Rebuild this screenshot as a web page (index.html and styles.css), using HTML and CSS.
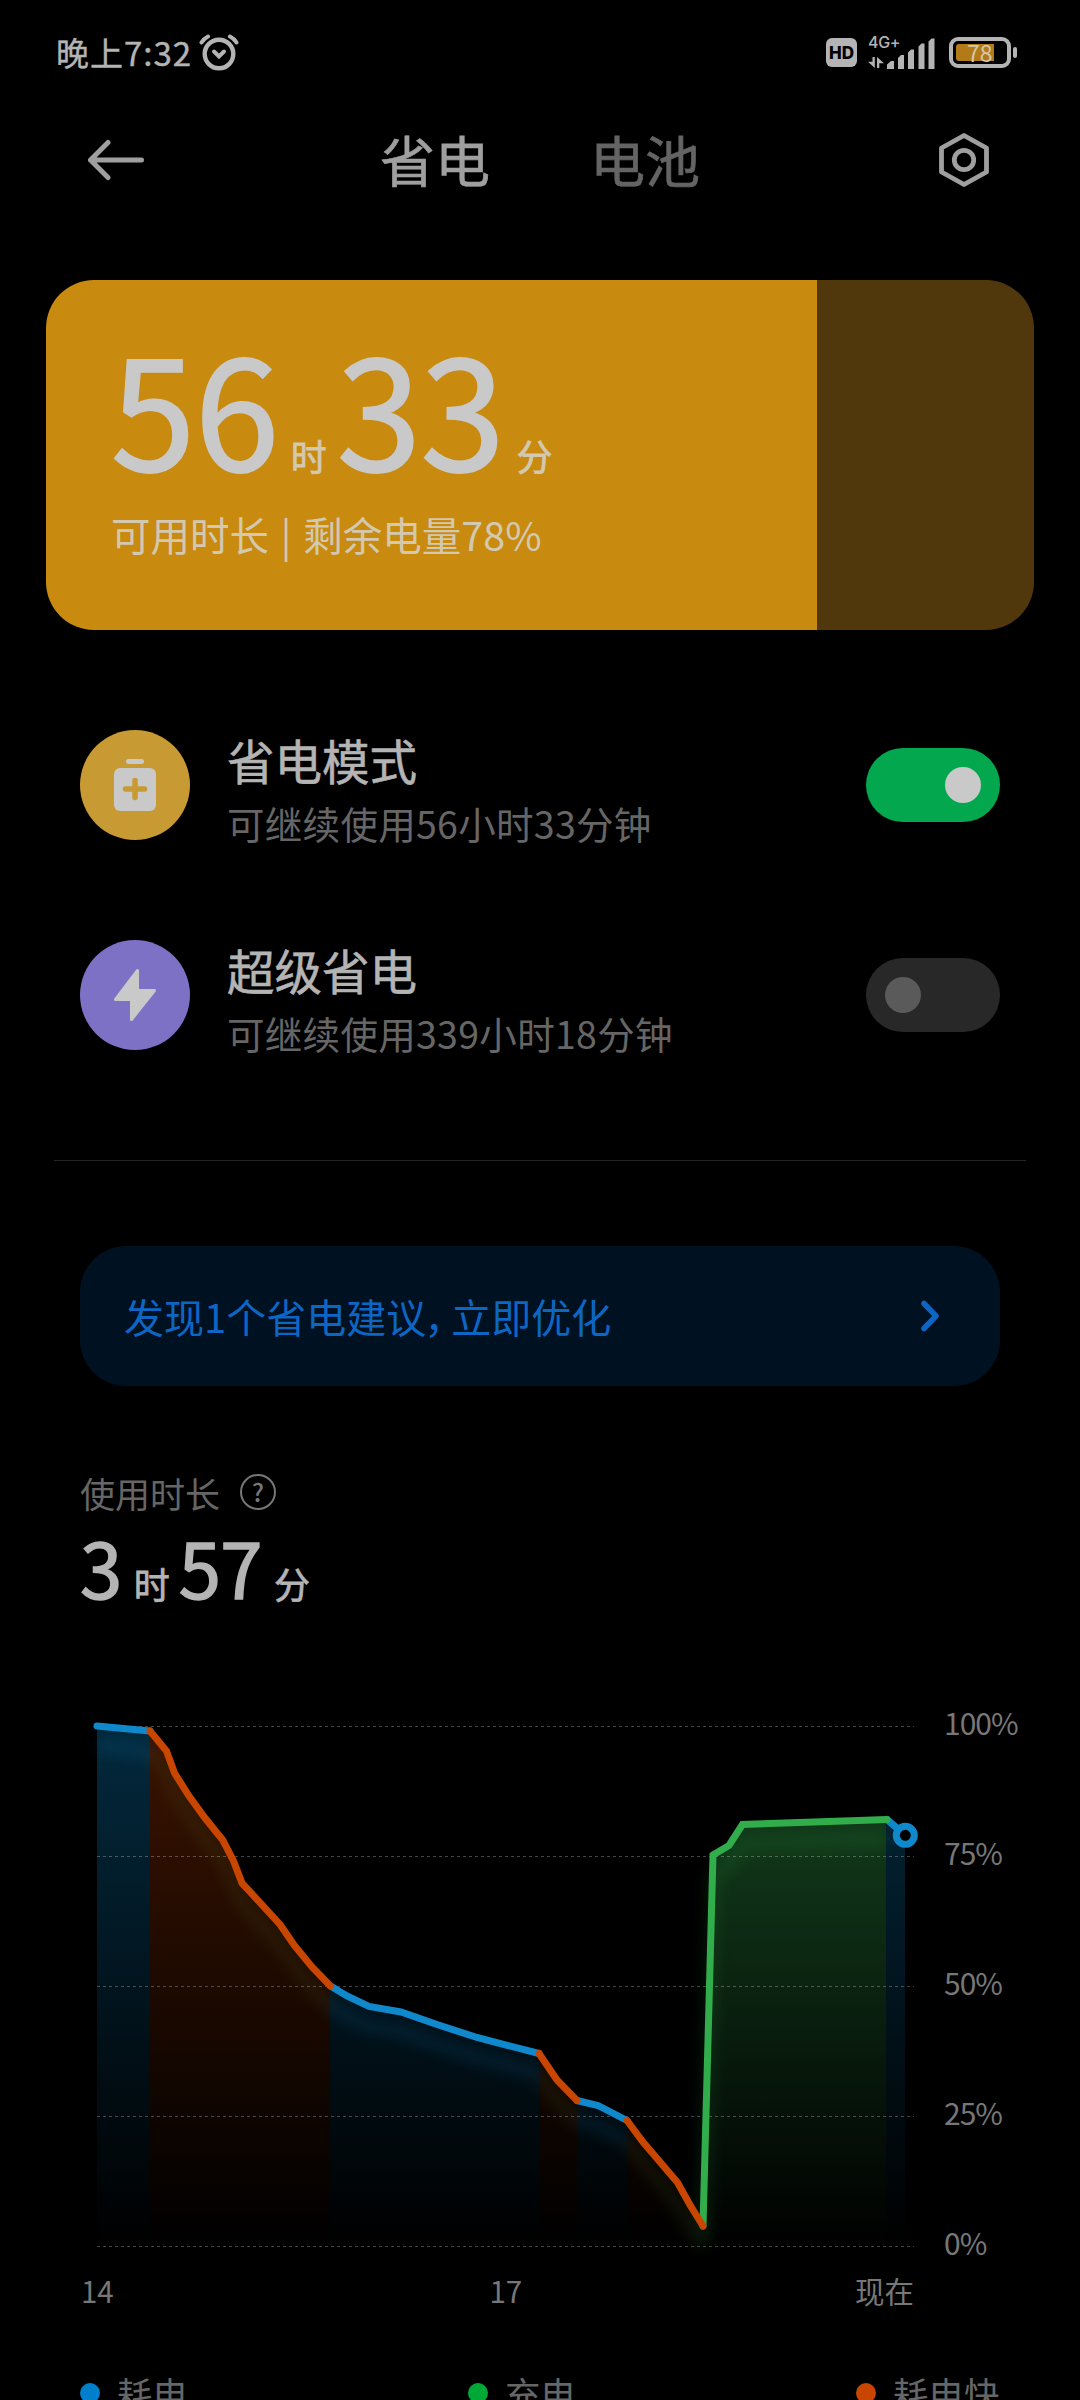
FILE: index.html
```html
<!DOCTYPE html>
<html lang="zh-CN">
<head>
  <meta charset="UTF-8">
  <title>省电与电池</title>
  <link rel="stylesheet" href="styles.css">
</head>
<body>

  <div class="status-bar">
    <span class="time">晚上7:32</span>
    <svg class="alarm" width="40" height="38" viewBox="0 0 40 38" fill="none" stroke="#b4b4b4" stroke-linecap="round">
      <circle cx="20" cy="21" r="14.3" stroke-width="4.4"/>
      <path d="M15 18.5l5 5 5-5" stroke-width="4"/>
      <path d="M2.500 9.500Q5 5.500 9 3.500M37.500 9.500Q35 5.500 31 3.500" stroke-width="4"/>
    </svg>
    <div class="status-icons">
      <span class="hd">HD</span>
      <div class="network">
        <span class="net-type">4G+</span>
        <svg width="68" height="34" viewBox="0 0 68 34" fill="#b4b4b4">
          <path d="M4.500 22H6.800V33L0 26.800H4.500ZM9 22L16 28.200H11.300V33H9Z"/>
          <path d="M19 34v-4.500l4-3.500h3v8zM30 34V23l3-3h3v14zM40 34V17.500l3-3h3V34zM50.500 34V11.500l3-3h3V34zM60.500 34V6.500l3-3h3V34z"/>
        </svg>
      </div>
      <div class="battery">
        <div class="battery-level"></div>
        <span class="battery-num">78</span>
      </div>
    </div>
  </div>

  <header>
    <svg width="58" height="42" viewBox="0 0 58 42" fill="none" stroke="#9f9f9f" stroke-width="5" stroke-linecap="round" stroke-linejoin="round">
      <path d="M54.500 21H3.500M21 3.500L3.500 21 21 38.500"/>
    </svg>
    <nav>
      <span class="tab active">省电</span>
      <span class="tab">电池</span>
    </nav>
    <svg width="52" height="56" viewBox="0 0 52 56" fill="none" stroke="#9f9f9f" stroke-width="4.800" stroke-linejoin="round">
      <path d="M26 3.500L48.500 16V40L26 52.500 3.500 40V16Z"/>
      <circle cx="26" cy="28" r="9.700"/>
    </svg>
  </header>

  <section class="battery-card">
    <div class="big-time"><b>56</b><i>时</i><b>33</b><i>分</i></div>
    <p>可用时长 | 剩余电量78%</p>
  </section>

  <section class="modes">
    <div class="mode">
      <div class="mode-icon yellow">
        <svg width="42" height="52" viewBox="0 0 42 52">
          <rect x="12" y="0" width="18" height="5" rx="2.500" fill="#c9c9c9"/>
          <rect x="0" y="9" width="42" height="43" rx="6" fill="#c9c9c9"/>
          <path d="M21 21.500V38.500M11.500 30H30.500" stroke="#c89a33" stroke-width="5.500" stroke-linecap="round"/>
        </svg>
      </div>
      <div class="mode-text">
        <h2>省电模式</h2>
        <p>可继续使用56小时33分钟</p>
      </div>
      <div class="switch on"></div>
    </div>
    <div class="mode">
      <div class="mode-icon purple">
        <svg width="44" height="54" viewBox="0 0 44 54" fill="#c9c9c9" stroke="#c9c9c9" stroke-width="3" stroke-linejoin="round">
          <path d="M24.500 2.500V22.500H41.500L18.500 51.500V31.500H2.500Z"/>
        </svg>
      </div>
      <div class="mode-text">
        <h2>超级省电</h2>
        <p>可继续使用339小时18分钟</p>
      </div>
      <div class="switch"></div>
    </div>
  </section>

  <a class="tip" href="#">
    <span>发现1个省电建议<span class="comma">，</span>立即优化</span>
    <svg width="20" height="32" viewBox="0 0 20 32" fill="none" stroke="#0d66c4" stroke-width="5.500" stroke-linecap="round" stroke-linejoin="round">
      <path d="M4 3.500L16 16 4 28.500"/>
    </svg>
  </a>

  <section class="usage">
    <div class="usage-label">使用时长<span class="help">?</span></div>
    <div class="usage-time"><b>3</b><i>时</i><b>57</b><i>分</i></div>
  </section>

  <section class="chart">
    <svg width="840" height="560" viewBox="80 1706 840 560" fill="none">
      <defs>
        <linearGradient id="blue" gradientUnits="userSpaceOnUse" x1="0" y1="1726" x2="0" y2="2246">
          <stop offset="0" stop-color="#03293d"/>
          <stop offset="1" stop-color="#000"/>
        </linearGradient>
        <linearGradient id="orange" gradientUnits="userSpaceOnUse" x1="0" y1="1726" x2="0" y2="2246">
          <stop offset="0" stop-color="#3a1300"/>
          <stop offset="1" stop-color="#000"/>
        </linearGradient>
        <linearGradient id="green" gradientUnits="userSpaceOnUse" x1="0" y1="1820" x2="0" y2="2246">
          <stop offset="0" stop-color="#11391a"/>
          <stop offset="1" stop-color="#000"/>
        </linearGradient>
        <filter id="glow" filterUnits="userSpaceOnUse" x="60" y="1690" width="880" height="600">
          <feGaussianBlur stdDeviation="7"/>
        </filter>
      </defs>

      <!-- relleno -->
      <path fill="url(#blue)" d="M97 2246V1726L150 1731V2246ZM330 2246V1986L347 1996 369 2006.500 401 2012 437 2024.500 477 2037.500 539 2053.500V2246ZM577 2246V2100.500L598 2105.500 627 2120.500V2246ZM886 2246V1819.500L905 1835V2246Z"/>
      <path fill="url(#orange)" d="M150 2246V1731L166.500 1751 174.500 1773 189 1796 205 1818 222.700 1840 233.500 1861 242 1883 280 1924.500 294 1945 312 1967 330 1986V2246ZM539 2246V2053.500L557 2080 577 2100.500V2246ZM627 2246V2120.500L643 2142 677.500 2182.500 690 2205 703 2226V2246Z"/>
      <path fill="url(#green)" d="M703 2246V2226L713 1855 729 1845.500 742.500 1824.500 886 1819.500V2246Z"/>

      <g stroke-width="14" transform="translate(0 20)" filter="url(#glow)" opacity=".13">
        <path stroke="#1088cc" d="M97 1726L150 1731M330.500 1986L347 1996 369 2006.500 401 2012 437 2024.500 477 2037.500 539 2053.500M577 2100.500L598 2105.500 627 2120.500"/>
        <path stroke="#5a7a30" d="M150 1731L166.500 1751 174.500 1773 189 1796 205 1818 222.700 1840 233.500 1861 242 1883 280 1924.500 294 1945 312 1967 330.500 1986M539 2053.500L557 2080 577 2100.500M627 2120.500L643 2142 677.500 2182.500 690 2205 703 2226"/>
        <path stroke="#32ad4c" d="M703 2226L713 1855 729 1845.500 742.500 1824.500 887 1819.500"/>
      </g>

      <path stroke="#fff" stroke-opacity=".27" stroke-dasharray="3 3" d="M97 1726.500H914M97 1856.500H914M97 1986.500H914M97 2116.500H914M97 2246.500H914"/>

      <!-- linea de bateria -->
      <g stroke-width="7" stroke-linecap="round">
        <path stroke="#1088cc" d="M97 1726L150 1731M330.500 1986L347 1996 369 2006.500 401 2012 437 2024.500 477 2037.500 539 2053.500M577 2100.500L598 2105.500 627 2120.500M887 1819.500L905 1835"/>
        <path stroke="#32ad4c" d="M703 2226L713 1855 729 1845.500 742.500 1824.500 887 1819.500"/>
        <path stroke="#c84600" d="M150 1731L166.500 1751 174.500 1773 189 1796 205 1818 222.700 1840 233.500 1861 242 1883 280 1924.500 294 1945 312 1967 330.500 1986M539 2053.500L557 2080 577 2100.500M627 2120.500L643 2142 677.500 2182.500 690 2205 703 2226"/>
      </g>
      <circle cx="905.300" cy="1835.300" r="9" fill="#000" stroke="#1088cc" stroke-width="7"/>
    </svg>
    <div class="y-axis">
      <span>100%</span>
      <span>75%</span>
      <span>50%</span>
      <span>25%</span>
      <span>0%</span>
    </div>
  </section>

  <div class="x-axis">
    <span>14</span>
    <span class="middle">17</span>
    <span>现在</span>
  </div>

  <footer>
    <span class="legend blue">耗电</span>
    <span class="legend green">充电</span>
    <span class="legend orange">耗电快</span>
  </footer>

</body>
</html>
```
FILE: styles.css
```css
* {
  box-sizing: border-box;
}

body {
  margin: 0;
  height: 2400px;
  overflow: hidden;
  background-color: #000;
  color: #b4b4b4;
  font-family: 'Noto Sans CJK SC', 'Noto Sans', sans-serif;
}

h2, p {
  margin: 0;
  font-weight: normal;
}

i {
  font-style: normal;
}

svg {
  display: block;
  flex: none;
}

/* barra de estado */
.status-bar {
  display: flex;
  height: 104px;
  padding: 0 63px 0 56px;
  align-items: center;
}

.time {
  font-size: 33px;
  letter-spacing: 1px;
  line-height: 40px;
  white-space: nowrap;
  -webkit-text-stroke: 0.4px;
}

.alarm {
  margin-left: 7px;
}

.status-icons {
  display: flex;
  margin-left: auto;
  align-items: center;
}

.hd {
  width: 31px;
  height: 29px;
  border-radius: 6px;
  background-color: #b4b4b4;
  color: #000;
  font: 800 17px/30px 'Inter', sans-serif;
  text-align: center;
}

.network {
  position: relative;
  margin-left: 11px;
}

.net-type {
  position: absolute;
  top: -1px;
  left: 0;
  font: 500 16px/16px 'Inter', sans-serif;
  letter-spacing: -0.3px;
}

.battery {
  position: relative;
  width: 62px;
  height: 31px;
  margin-left: 13px;
  margin-right: 6px;
  padding: 3px;
  border: 4px solid #b4b4b4;
  border-radius: 9px;
}

.battery::after {
  content: '';
  position: absolute;
  right: -10px;
  top: 6px;
  width: 4px;
  height: 11px;
  border-radius: 2px;
  background-color: #b4b4b4;
}

.battery-level {
  width: 38px;
  height: 17px;
  border-radius: 3px 0 0 3px;
  background-color: #b37a18;
}

.battery-num {
  position: absolute;
  top: 0;
  left: 14px;
  color: #d3c8b0;
  font-size: 23px;
  line-height: 23px;
}

/* cabecera */
header {
  display: flex;
  height: 112px;
  padding: 0 90px 0 87px;
  align-items: center;
  justify-content: space-between;
}

nav {
  display: flex;
  gap: 100px;
  margin: 0 3px 4px 0;
}

.tab {
  color: #646464;
  font-size: 55px;
  line-height: 60px;
  -webkit-text-stroke: 0.7px;
}

.tab.active {
  color: #9f9f9f;
}

/* tarjeta */
.battery-card {
  height: 350px;
  margin: 64px 46px 0;
  padding: 55px 65px;
  border-radius: 48px;
  background: linear-gradient(to right, #c88a0f 78%, #50380c 78%);
  color: #c9c9c9;
}

.big-time {
  display: flex;
  height: 140px;
  align-items: baseline;
  line-height: 140px;
}

.big-time b {
  font-size: 152px;
  font-weight: 400;
  letter-spacing: -0.5px;
  -webkit-text-stroke: 2px;
}

.big-time i {
  width: 35px;
  margin: 0 11px 0 12px;
  color: #d3c8b0;
  font-size: 36px;
  -webkit-text-stroke: 0.8px;
}

.battery-card p {
  margin-top: 31px;
  color: #d3c8b0;
  font-size: 39.500px;
  line-height: 56px;
  word-spacing: 3px;
}

/* modos */
.modes {
  display: flex;
  flex-direction: column;
  gap: 100px;
  margin: 0 54px;
  padding: 100px 26px 110px;
  border-bottom: 1px solid #222;
}

.mode {
  display: flex;
  height: 110px;
  align-items: center;
}

.mode-icon {
  display: flex;
  width: 110px;
  height: 110px;
  align-items: center;
  justify-content: center;
  border-radius: 50%;
}

.mode-icon.yellow {
  background-color: #c89a33;
}

.mode-icon.purple {
  background-color: #7d71c6;
}

.mode-text {
  flex: 1;
  margin-left: 37px;
  padding-top: 12px;
}

.mode-text h2 {
  font-size: 47.500px;
  line-height: 64px;
  -webkit-text-stroke: 0.6px;
}

.mode-text p {
  color: #666;
  font-size: 37.500px;
  letter-spacing: 0.3px;
  line-height: 62px;
}

.switch {
  display: flex;
  width: 134px;
  height: 74px;
  padding: 19px;
  border-radius: 37px;
  background-color: #282828;
}

.switch::before {
  content: '';
  width: 36px;
  height: 36px;
  border-radius: 50%;
  background-color: #5a5a5a;
}

.switch.on {
  justify-content: flex-end;
  background-color: #03a84e;
}

.switch.on::before {
  background-color: #c9c9c9;
}

/* consejo */
.tip {
  display: flex;
  height: 140px;
  margin: 85px 80px 0;
  padding: 0 60px 0 44px;
  align-items: center;
  justify-content: space-between;
  border-radius: 46px;
  background-color: #001121;
  color: #0d66c4;
  font-size: 40px;
  text-decoration: none;
}

.comma {
  margin-left: -2px;
  letter-spacing: -13px;
}

/* tiempo de uso */
.usage {
  margin: 82px 80px 0;
}

.usage-label {
  display: flex;
  height: 48px;
  align-items: center;
  color: #666;
  font-size: 35px;
}

.help {
  width: 36px;
  height: 36px;
  margin-left: 20px;
  border: 2.500px solid #777;
  border-radius: 50%;
  color: #777;
  font-size: 25px;
  font-weight: 500;
  line-height: 30px;
  text-align: center;
}

.usage-time {
  display: flex;
  height: 90px;
  padding-top: 5px;
  align-items: baseline;
  line-height: 90px;
}

.usage-time b {
  font-size: 76px;
  font-weight: 400;
  letter-spacing: -0.5px;
  -webkit-text-stroke: 1.5px;
}

.usage-time i {
  width: 35px;
  margin: 0 10px 0 12px;
  font-size: 36px;
  -webkit-text-stroke: 0.8px;
}

/* grafica */
.chart {
  display: flex;
  margin: 100px 0 0 80px;
}

.y-axis {
  display: flex;
  flex-direction: column;
  height: 560px;
  margin: -4px 0 0 24px;
  justify-content: space-between;
  color: #777;
  font-size: 30px;
  letter-spacing: -1px;
  line-height: 40px;
}

.x-axis {
  display: flex;
  justify-content: space-between;
  width: 833px;
  margin: 2px 0 0 81px;
  color: #777;
  font-size: 29.500px;
  line-height: 44px;
}

.x-axis .middle {
  margin-left: 43px;
}

footer {
  display: grid;
  grid-template-columns: 388px 388px auto;
  margin: 54px 0 0 80px;
}

.legend {
  display: flex;
  align-items: center;
  color: #666;
  font-size: 35.500px;
  line-height: 54px;
}

.legend::before {
  content: '';
  width: 20px;
  height: 20px;
  margin-right: 17px;
  border-radius: 50%;
}

.legend.blue::before {
  background-color: #0080cc;
}

.legend.green::before {
  background-color: #00a836;
}

.legend.orange::before {
  background-color: #c84600;
}
```
